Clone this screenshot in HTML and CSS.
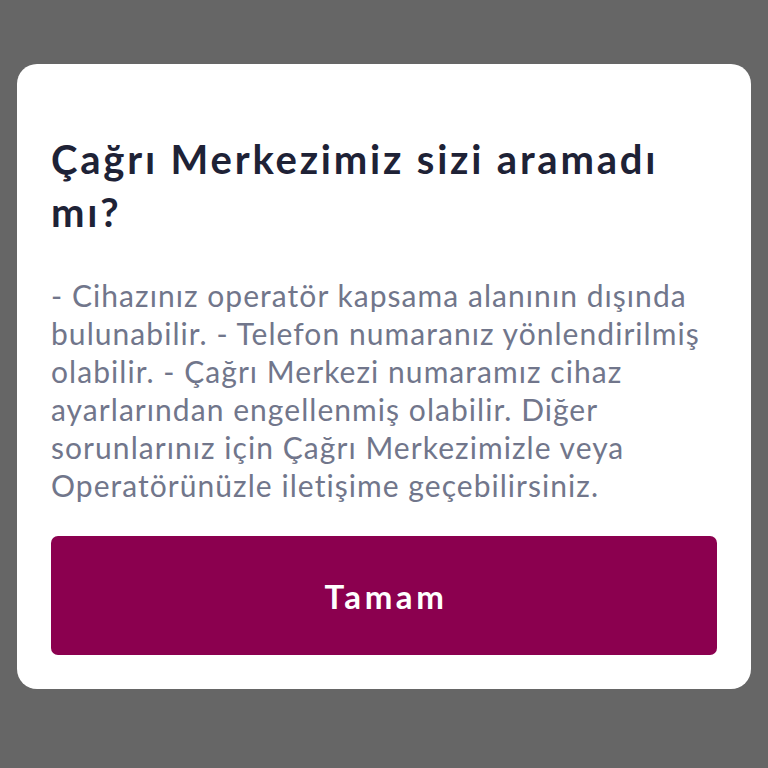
FILE: index.html
```html
<!DOCTYPE html>
<html lang="tr">
<head>
<meta charset="utf-8">
<link rel="stylesheet" href="styles.css">
</head>
<body>
<div class="dialog">
  <h1 class="title">Çağrı Merkezimiz sizi aramadı mı?</h1>
  <p class="message">- Cihazınız operatör kapsama alanının dışında bulunabilir. - Telefon numaranız yönlendirilmiş olabilir. - Çağrı Merkezi numaramız cihaz ayarlarından engellenmiş olabilir. Diğer sorunlarınız için Çağrı Merkezimizle veya Operatörünüzle iletişime geçebilirsiniz.</p>
  <button class="ok">Tamam</button>
</div>
</body>
</html>
```
FILE: styles.css
```css
html, body {
  margin: 0;
  padding: 0;
  background: #666666;
  height: 100%;
}
body {
  font-family: Lato, "Noto Sans", sans-serif;
  padding-top: 64px;
  box-sizing: border-box;
}
.dialog {
  margin: 0 17px;
  background: #ffffff;
  border-radius: 20px;
  padding: 69px 34px 34px;
  display: flex;
  flex-direction: column;
}
.title {
  margin: 0;
  font-size: 40px;
  line-height: 53px;
  font-weight: 700;
  letter-spacing: 2.8px;
  color: #1e2236;
}
.message {
  margin: 37px 0 0;
  font-size: 30px;
  line-height: 38px;
  letter-spacing: 1.05px;
  color: #71768b;
}
.ok {
  margin-top: 32px;
  height: 119px;
  border: 0;
  border-radius: 7px;
  background: #8b004f;
  color: #ffffff;
  font-family: Lato, "Noto Sans", sans-serif;
  font-size: 33px;
  font-weight: 700;
  letter-spacing: 3.6px;
  padding: 0 0 0 4px;
}
```
